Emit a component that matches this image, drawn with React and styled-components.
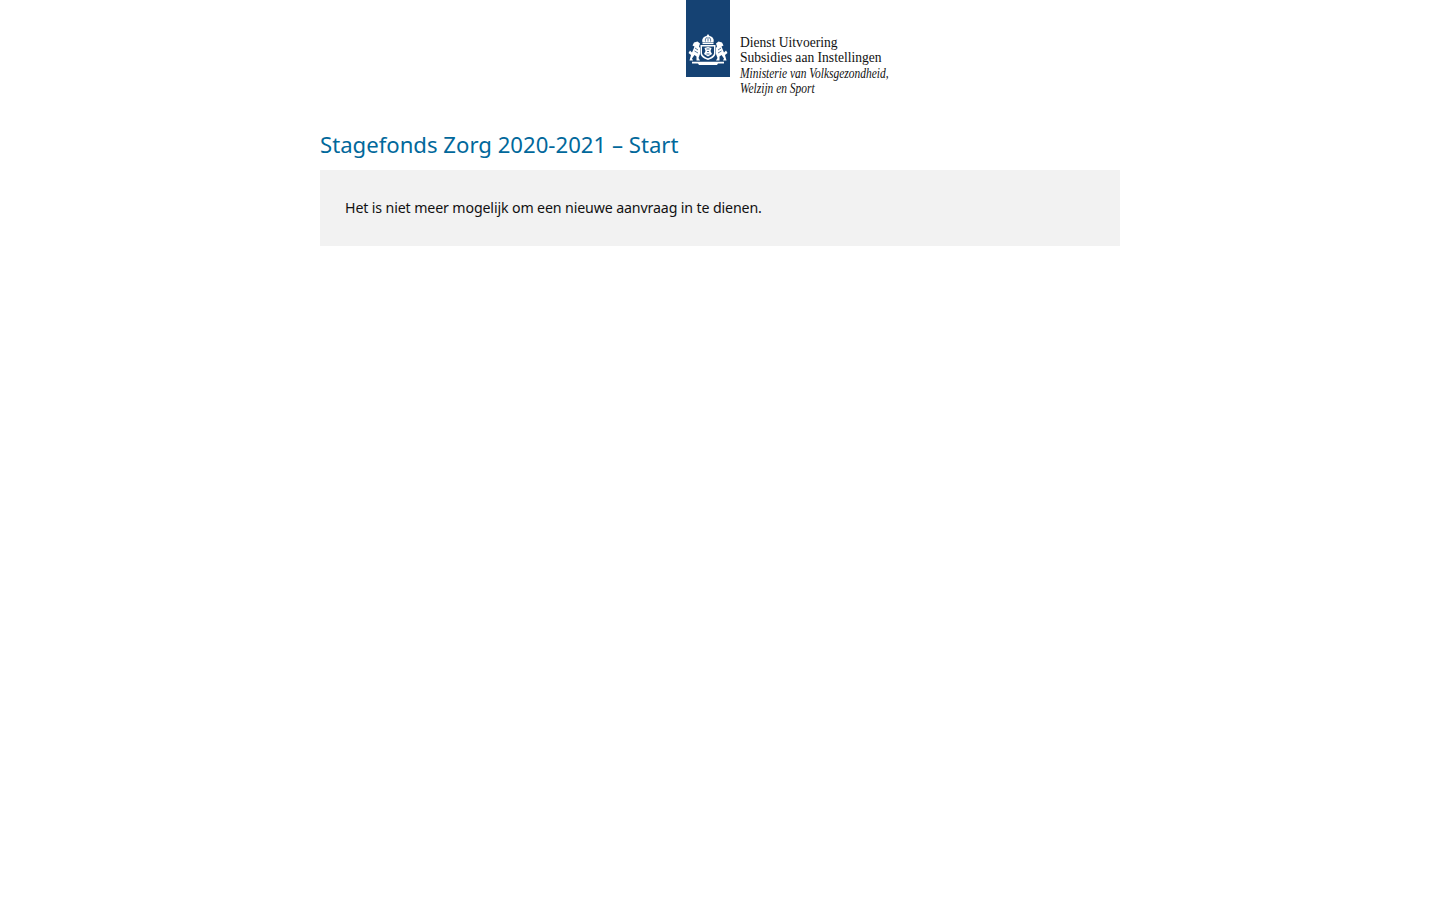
import styled, { createGlobalStyle } from "styled-components";

const Global = createGlobalStyle`
    body {
        margin: 0;
        background: #fff;
        font-family: "Noto Sans", "Open Sans", sans-serif;
    }
`;

const Page = styled.div`
    width: 800px;
    margin: 0 auto;
`;

const Header = styled.header`
    display: flex;
    height: 97px;
    padding-left: 366px;
    gap: 10px;
`;

const Bar = styled.div`
    width: 44px;
    height: 77px;
    background: #154273;
    display: flex;
    align-items: flex-end;
    justify-content: center;
    padding-bottom: 11px;
    box-sizing: border-box;
`;

const LogoText = styled.div`
    display: flex;
    flex-direction: column;
    padding-top: 34.5px;
    font-family: "Liberation Serif", serif;
    color: #111;
`;

const LogoLine = styled.div`
    height: 15.5px;
    line-height: 15.5px;
    font-size: 14.5px;
    font-style: ${(p) => (p.$italic ? "italic" : "normal")};
    transform: scaleX(${(p) => (p.$italic ? 0.79 : 0.935)});
    transform-origin: left center;
    white-space: nowrap;
`;

const Title = styled.h1`
    margin: 0;
    padding-top: 30px;
    height: 43px;
    line-height: 34px;
    font-size: 22.15px;
    font-weight: 400;
    color: #01689b;
    box-sizing: content-box;
`;

const Notice = styled.div`
    background: #f2f2f2;
    height: 76px;
    padding: 0 25px 2px;
    box-sizing: border-box;
    display: flex;
    align-items: center;
    font-size: 14.2px;
    letter-spacing: -0.13px;
    color: #111;
`;

function Emblem() {
    return (
        <svg width="40" height="33" viewBox="0 0 40 33" fill="#fff">
            {/* crown */}
            <path d="M14.5 9.5 C13.5 6 15.5 3.5 18.5 3 L20 1 L21.5 3 C24.5 3.5 26.5 6 25.5 9.5 Z" />
            <path d="M17.5 8.5 C17 6.5 17.5 5 19 4.5 M22.5 8.5 C23 6.5 22.5 5 21 4.5 M20 4 V8.5" stroke="#154273" strokeWidth="0.7" fill="none" />
            <rect x="14.5" y="10" width="11" height="1.1" />
            {/* shield */}
            <path d="M12.5 12 H27.5 V20 C27.5 24 23 26 20 27 C17 26 12.5 24 12.5 20 Z" />
            <path d="M14 13.4 H26 V20 C26 22.6 22.4 24.4 20 25.3 C17.6 24.4 14 22.6 14 20 Z" fill="#154273" />
            <path d="M16.5 15 L20 14 L23.5 15 L22.5 18 L24 21 L20 23.5 L16 21 L17.5 18 Z" />
            <path d="M18.5 16 H21.5 M19 18.5 H21 M18.5 21 H21.5" stroke="#154273" strokeWidth="0.8" />
            {/* left lion */}
            <path d="M6 9.5 L9.5 8.5 L12 10.5 L11 13.5 L12 15 L12 21 L10.5 25 L12 27.5 L8.5 27.5 L8.5 23.5 L6.5 22 L4 25.5 L5 27.5 L1.5 27.5 L3 22 L0.5 20 L2 17.5 L4 19.5 L5.5 16 L6.5 13.5 L4.5 12.5 Z" />
            <path d="M7 15 L10 17 M6.5 18 L10 20" stroke="#154273" strokeWidth="0.7" />
            {/* right lion */}
            <path d="M34 9.5 L30.5 8.5 L28 10.5 L29 13.5 L28 15 L28 21 L29.5 25 L28 27.5 L31.5 27.5 L31.5 23.5 L33.5 22 L36 25.5 L35 27.5 L38.5 27.5 L37 22 L39.5 20 L38 17.5 L36 19.5 L34.5 16 L33.5 13.5 L35.5 12.5 Z" />
            <path d="M33 15 L30 17 M33.5 18 L30 20" stroke="#154273" strokeWidth="0.7" />
            {/* ribbon */}
            <path d="M4 28.8 H36 V30.4 H30 L29 32 H11 L10 30.4 H4 Z" />
        </svg>
    );
}

export default function App() {
    return (
        <Page>
            <Global />
            <Header>
                <Bar>
                    <Emblem />
                </Bar>
                <LogoText>
                    <LogoLine>Dienst Uitvoering</LogoLine>
                    <LogoLine>Subsidies aan Instellingen</LogoLine>
                    <LogoLine $italic>Ministerie van Volksgezondheid,</LogoLine>
                    <LogoLine $italic>Welzijn en Sport</LogoLine>
                </LogoText>
            </Header>
            <Title>Stagefonds Zorg 2020-2021 – Start</Title>
            <Notice>Het is niet meer mogelijk om een nieuwe aanvraag in te dienen.</Notice>
        </Page>
    );
}
